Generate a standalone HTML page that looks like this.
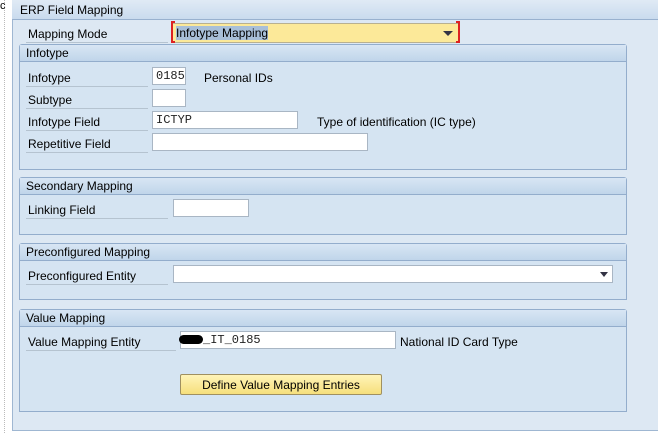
<!DOCTYPE html><html><head><style>
body{margin:0;width:658px;height:433px;background:#fff;position:relative;overflow:hidden;font-family:"Liberation Sans",sans-serif;font-size:12px;color:#000}
.a{position:absolute}
.panel{left:12px;top:0;width:646px;height:430px;background:#dde8f3;border-left:1px solid #9fb7d2;border-bottom:1px solid #9fb7d2}
.ph{left:12px;top:0;width:646px;height:19px;background:linear-gradient(#e0eaf5,#c9dbee);border-bottom:1px solid #98b1cf}
.g{background:#d5e4f2;border:1px solid #93adcc;border-radius:3px 3px 0 0}
.gh{background:linear-gradient(#d8e6f4,#c0d5ea);border-bottom:1px solid #93adcc;height:16px;padding-left:6px;line-height:17px}
.lbl{border-bottom:1px solid #b5c3d0;height:18px;line-height:20px;padding-left:2px}
.in{background:#fff;border:1px solid #a9b6c4;height:18px;box-sizing:border-box;font-family:"Liberation Mono",monospace;font-size:12px;line-height:17px;padding-left:3px;color:#222}
</style></head><body>
<div class="a" style="left:4px;top:0;width:1px;height:433px;border-left:1px dotted #bbb"></div>
<div class="a" style="left:0;top:0;font-size:11px">c</div>
<div class="a panel"></div>
<div class="a ph"><span style="position:absolute;left:8px;top:3px">ERP Field Mapping</span></div>
<div class="a lbl" style="left:26px;top:24px;width:140px">Mapping Mode</div>
<div class="a" style="left:172px;top:23px;width:287px;height:20px;background:#fce999;border:1px solid #b8b090;box-sizing:border-box"><span style="position:absolute;left:3px;top:2px;background:#a8bfd8">Infotype Mapping</span><span style="position:absolute;right:5px;top:7px;border-left:5px solid transparent;border-right:5px solid transparent;border-top:5px solid #334"></span></div>
<div class="a" style="left:171px;top:21px;width:4px;height:22px;border:2px solid #d22;border-right:none;box-sizing:border-box"></div>
<div class="a" style="left:456px;top:21px;width:4px;height:22px;border:2px solid #d22;border-left:none;box-sizing:border-box"></div>

<div class="a g" style="left:19px;top:44px;width:606px;height:124px"><div class="gh">Infotype</div></div>
<div class="a lbl" style="left:26px;top:68px;width:120px">Infotype</div>
<div class="a in" style="left:152px;top:67px;width:34px">0185</div>
<div class="a" style="left:204px;top:71px">Personal IDs</div>
<div class="a lbl" style="left:26px;top:90px;width:120px">Subtype</div>
<div class="a in" style="left:152px;top:89px;width:34px"></div>
<div class="a lbl" style="left:26px;top:112px;width:120px">Infotype Field</div>
<div class="a in" style="left:152px;top:111px;width:146px">ICTYP</div>
<div class="a" style="left:317px;top:115px">Type of identification (IC type)</div>
<div class="a lbl" style="left:26px;top:134px;width:120px">Repetitive Field</div>
<div class="a in" style="left:152px;top:133px;width:216px"></div>

<div class="a g" style="left:19px;top:177px;width:606px;height:56px"><div class="gh">Secondary Mapping</div></div>
<div class="a lbl" style="left:26px;top:200px;width:140px">Linking Field</div>
<div class="a in" style="left:173px;top:199px;width:76px"></div>

<div class="a g" style="left:19px;top:243px;width:606px;height:55px"><div class="gh">Preconfigured Mapping</div></div>
<div class="a lbl" style="left:26px;top:266px;width:140px">Preconfigured Entity</div>
<div class="a in" style="left:173px;top:265px;width:440px"><span style="position:absolute;right:4px;top:6px;border-left:4px solid transparent;border-right:4px solid transparent;border-top:5px solid #334"></span></div>

<div class="a g" style="left:19px;top:309px;width:606px;height:101px"><div class="gh">Value Mapping</div></div>
<div class="a lbl" style="left:26px;top:332px;width:148px">Value Mapping Entity</div>
<div class="a in" style="left:180px;top:331px;width:216px;padding-left:22px">_IT_0185</div>
<div class="a" style="left:179px;top:335px;width:24px;height:9px;background:#000;border-radius:5px"></div>
<div class="a" style="left:400px;top:335px">National ID Card Type</div>
<div class="a" style="left:180px;top:374px;width:202px;height:21px;box-sizing:border-box;border:1px solid #a09060;border-radius:2px;background:linear-gradient(#fff4b8,#f6df7c);text-align:center;line-height:20px">Define Value Mapping Entries</div>
</body></html>
